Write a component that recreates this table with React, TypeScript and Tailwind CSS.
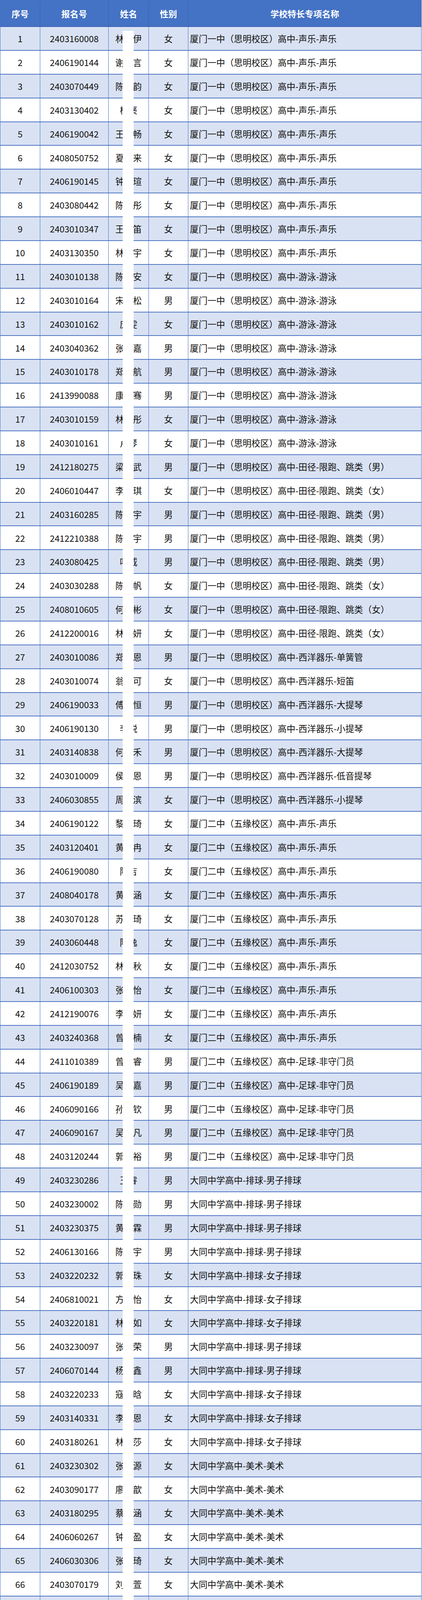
import React from "react";

const A = "厦门一中（思明校区）高中-";
const B = "厦门二中（五缘校区）高中-";
const C = "大同中学高中-";

const raw: string[] = [
  "2403160008|林某伊|女|A声乐-声乐",
  "2406190144|谢某言|女|A声乐-声乐",
  "2403070449|陈某韵|女|A声乐-声乐",
  "2403130402|杨褒|女|A声乐-声乐",
  "2406190042|王某畅|女|A声乐-声乐",
  "2408050752|夏某来|女|A声乐-声乐",
  "2406190145|钟某瑄|女|A声乐-声乐",
  "2403080442|陈某彤|女|A声乐-声乐",
  "2403010347|王某笛|女|A声乐-声乐",
  "2403130350|林某宇|女|A声乐-声乐",
  "2403010138|陈某安|女|A游泳-游泳",
  "2403010164|宋某松|男|A游泳-游泳",
  "2403010162|庞雯|女|A游泳-游泳",
  "2403040362|张某嘉|男|A游泳-游泳",
  "2403010178|郑某航|男|A游泳-游泳",
  "2413990088|康某骞|男|A游泳-游泳",
  "2403010159|林某彤|女|A游泳-游泳",
  "2403010161|卢琴|女|A游泳-游泳",
  "2412180275|梁某武|男|A田径-限跑、跳类（男）",
  "2406010447|李某琪|女|A田径-限跑、跳类（女）",
  "2403160285|陈某宇|男|A田径-限跑、跳类（男）",
  "2412210388|陈某宇|男|A田径-限跑、跳类（男）",
  "2403080425|叶威|男|A田径-限跑、跳类（男）",
  "2403030288|陈某帆|女|A田径-限跑、跳类（女）",
  "2408010605|何某彬|女|A田径-限跑、跳类（女）",
  "2412200016|林某妍|女|A田径-限跑、跳类（女）",
  "2403010086|郑某恩|男|A西洋器乐-单簧管",
  "2403010074|翁某可|女|A西洋器乐-短笛",
  "2406190033|傅某恒|男|A西洋器乐-大提琴",
  "2406190130|李锐|男|A西洋器乐-小提琴",
  "2403140838|何某禾|男|A西洋器乐-大提琴",
  "2403010009|侯某恩|男|A西洋器乐-低音提琴",
  "2406030855|周某滨|女|A西洋器乐-小提琴",
  "2406190122|黎某琦|女|B声乐-声乐",
  "2403120401|黄某冉|女|B声乐-声乐",
  "2406190080|陈吉|女|B声乐-声乐",
  "2408040178|黄某涵|女|B声乐-声乐",
  "2403070128|苏某琦|女|B声乐-声乐",
  "2403060448|陈逸|女|B声乐-声乐",
  "2412030752|林某秋|女|B声乐-声乐",
  "2406100303|张某怡|女|B声乐-声乐",
  "2412190076|李某妍|女|B声乐-声乐",
  "2403240368|曾某楠|女|B声乐-声乐",
  "2411010389|曾某睿|男|B足球-非守门员",
  "2406190189|吴某嘉|男|B足球-非守门员",
  "2406090166|孙某钦|男|B足球-非守门员",
  "2406090167|吴某凡|男|B足球-非守门员",
  "2403120244|郭某裕|男|B足球-非守门员",
  "2403230286|王睿|男|C排球-男子排球",
  "2403230002|陈某勋|男|C排球-男子排球",
  "2403230375|黄某霖|男|C排球-男子排球",
  "2406130166|陈某宇|男|C排球-男子排球",
  "2403220232|郭某珠|女|C排球-女子排球",
  "2406810021|方某怡|女|C排球-女子排球",
  "2403220181|林某如|女|C排球-女子排球",
  "2403230097|张某荣|男|C排球-男子排球",
  "2406070144|杨某鑫|男|C排球-男子排球",
  "2403220233|寇某晗|女|C排球-女子排球",
  "2403140331|李某恩|女|C排球-女子排球",
  "2403180261|林某莎|女|C排球-女子排球",
  "2403230302|张某源|女|C美术-美术",
  "2403090177|廖某歆|女|C美术-美术",
  "2403180295|蔡某涵|女|C美术-美术",
  "2406060267|钟某盈|女|C美术-美术",
  "2406030306|张某琦|女|C美术-美术",
  "2403070179|刘某萱|女|C美术-美术",
  "2403100174|王某皓|男|C美术-美术",
  "2403140041|王某烨|女|C美术-美术",
  "2403130379|吴某煜|女|C美术-美术",
  "2403080739|林某婧|女|C美术-美术",
  "2403060386|林玫|女|C美术-美术",
  "2406040189|黄某芸|女|C美术-美术",
  "2403030460|黄某欣|女|C美术-美术",
  "2403080672|蔡某璟|女|C美术-美术",
  "2403180063|姜某丞|男|C美术-美术",
  "2403120084|蔡某宇|男|C美术-美术",
  "2403070515|杨开|女|C美术-美术",
  "2403110288|陈锐|男|C美术-美术",
  "2403150010|吴某淇|女|C美术-美术",
  "2403090325|赵某琪|女|C美术-美术",
  "2403090200|郑某瀚|女|C美术-美术",
  "2403230053|陈某园|女|C美术-美术",
];

const rows = raw.map((r) => {
  const [id, name, sex, s] = r.split("|");
  const prefix = s[0] === "A" ? A : s[0] === "B" ? B : C;
  return { id, name, sex, school: prefix + s.slice(1) };
});

const cell = "flex items-center justify-center border-r border-[#4472c4] overflow-hidden";

export default function App() {
  return (
    <div className="bg-white w-[1080px]">
      <div className="relative w-[1079px] border-l border-t border-[#4472c4] font-['Noto_Sans_CJK_SC',sans-serif] leading-none text-[#111]">
        <div className="grid grid-cols-[102px_175px_103px_101px_1fr] grid-rows-[1fr] h-[68px] bg-[#4472c4] border-b-2 border-[#3b63b3] text-white font-bold text-[22px] overflow-hidden">
          <div className="flex items-center justify-center border-r border-[#3b63b3]">序号</div>
          <div className="flex items-center justify-center border-r border-[#3b63b3]">报名号</div>
          <div className="flex items-center justify-center border-r border-[#3b63b3]">姓名</div>
          <div className="flex items-center justify-center border-r border-[#3b63b3]">性别</div>
          <div className="flex items-center justify-center border-r border-[#3b63b3]">学校特长专项名称</div>
        </div>
        {rows.map((r, i) => (
          <div
            key={i}
            className={
              i % 2 === 0
                ? "grid grid-cols-[102px_175px_103px_101px_1fr] grid-rows-[1fr] h-[60.88px] overflow-hidden border-b-2 border-[#4f76c4] bg-[#d9e2f3] text-[22.5px]"
                : "grid grid-cols-[102px_175px_103px_101px_1fr] grid-rows-[1fr] h-[60.88px] overflow-hidden border-b-2 border-[#4f76c4] bg-white text-[22.5px]"
            }
          >
            <div className={cell}>{i + 1}</div>
            <div className={cell}>{r.id}</div>
            <div className={cell}>{r.name}</div>
            <div className={cell}>{r.sex}</div>
            <div className="flex items-center pl-[4px] border-r border-[#4472c4] whitespace-nowrap overflow-hidden">{r.school}</div>
          </div>
        ))}
        <div className="absolute left-[313px] top-[78px] bottom-0 w-[28px] bg-white" />
      </div>
    </div>
  );
}
